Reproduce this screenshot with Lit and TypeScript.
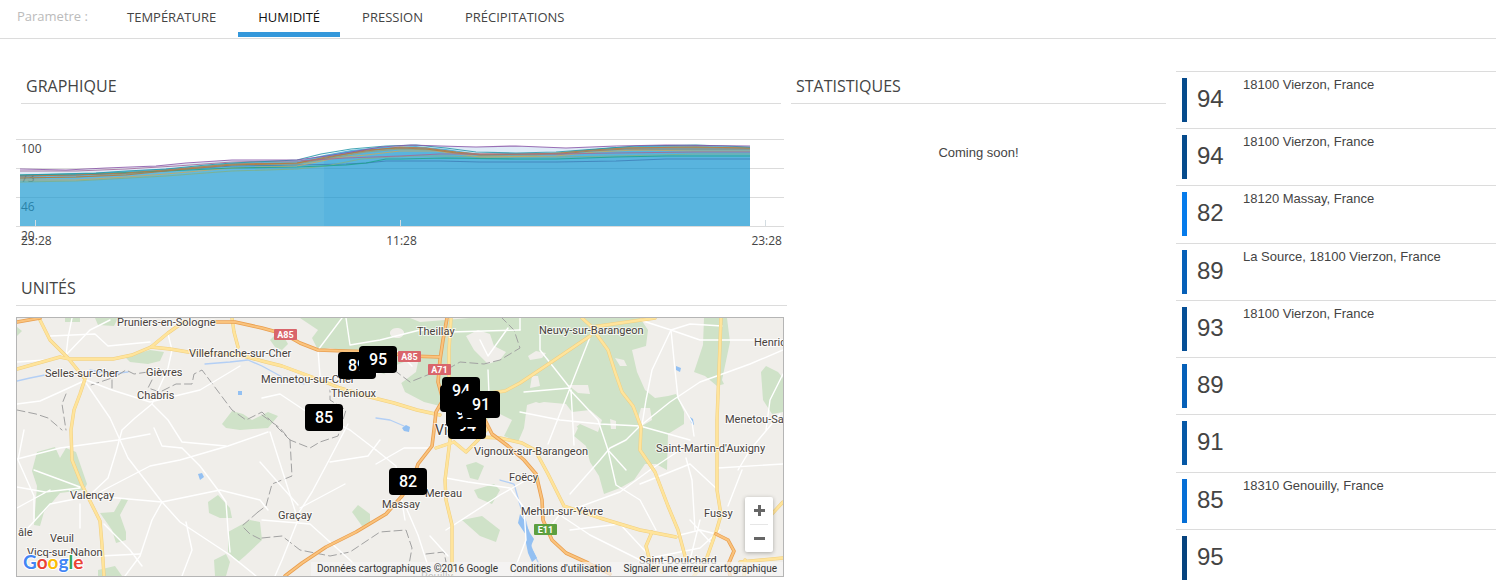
import { LitElement, html, svg, css } from "lit";
import { customElement, property, state } from "lit/decorators.js";
import { classMap } from "lit/directives/class-map.js";

interface Unit {
  value: number;
  color: string;
  address: string;
}

const UNITS: Unit[] = [
  { value: 94, color: "#064b8c", address: "18100 Vierzon, France" },
  { value: 94, color: "#064b8c", address: "18100 Vierzon, France" },
  { value: 82, color: "#067beb", address: "18120 Massay, France" },
  { value: 89, color: "#0660b8", address: "La Source, 18100 Vierzon, France" },
  { value: 93, color: "#064f96", address: "18100 Vierzon, France" },
  { value: 89, color: "#0660b8", address: "" },
  { value: 91, color: "#0658a6", address: "" },
  { value: 85, color: "#066fd6", address: "18310 Genouilly, France" },
  { value: 95, color: "#06437e", address: "" },
];

const PARAMETERS = ["Température", "Humidité", "Pression", "Précipitations"];

/* ---------- chart ---------- */

const SERIES: { color: string; points: string }[] = [
  { color: "#3f7fb8", points: "4,37 60,36 120,34 170,30 216,27 281,26 330,25 350,24 370,22 424,22 464,23 540,23 600,22 650,20 734,20" },
  { color: "#7fb08a", points: "4,43 60,42 150,37 216,32 281,30 310,27 345,20 375,18 400,17 430,17 464,18 540,18 600,17 680,15 734,15" },
  { color: "#c8a860", points: "4,41 60,41 110,38 150,35 216,29 281,27 320,19 350,16 384,12 420,12 464,18 540,17 580,13 620,11 680,12 734,12" },
  { color: "#9aa070", points: "4,39 60,38 110,35 160,31 216,26 281,25 310,20 350,13 384,10 420,11 464,16 520,16 560,12 600,9 660,8 734,9" },
  { color: "#1fa38c", points: "4,36 60,35 95,34 150,32 216,29 281,28 330,26 350,24 370,20 384,20 430,19 500,20 540,20 600,18 650,17 734,17" },
  { color: "#c07a3e", points: "4,37 60,36 110,34 160,30 216,25 281,24 310,18 350,12 384,8 410,9 440,13 464,15 510,15 545,14 575,11 610,9 680,8 734,9" },
  { color: "#b5793f", points: "4,39 60,38 110,36 160,31 216,26 281,24 310,19 350,11 384,9 410,10 440,14 464,16 510,15 545,15 575,12 610,10 680,10 734,10" },
  { color: "#a46a98", points: "4,32 60,32 110,30 160,27 216,23 281,22 330,19 384,17 424,15 540,15 600,14 680,13 734,13" },
  { color: "#2596a8", points: "4,36 40,35 80,34 110,32 150,30 190,26 216,24 281,21 305,15 335,10 370,7 400,6 430,9 460,13 500,14 540,13 580,10 620,7 680,6 734,8" },
  { color: "#8a56a8", points: "4,30 50,31 90,29 140,27 170,24 216,21 281,21 310,17 335,13 365,8 395,6 424,7 460,8 500,7 550,9 600,7 650,6 734,7" },
];

const TICKS = [19, 384, 749];

@customElement("humidity-chart")
class HumidityChart extends LitElement {
  static styles = css`
    :host {
      display: block;
      font: 12px/16px "Open Sans", sans-serif;
      color: #444;
    }
    .plot {
      position: relative;
    }
    .scale {
      position: absolute;
      top: 2px;
      left: 5px;
      display: grid;
      grid-auto-rows: 29px;
    }
    .area {
      position: relative;
      display: block;
      width: 100%;
      height: 88px;
    }
    .time {
      display: flex;
      justify-content: space-between;
      padding: 6px 2px 0 5px;
    }
  `;

  render() {
    return html`
      <div class="plot">
        <div class="scale">
          <span>100</span><span>73</span><span>46</span><span>20</span>
        </div>
        <svg class="area" viewBox="0 0 768 88" preserveAspectRatio="none" role="img" aria-label="Humidité">
          ${[0, 29, 58, 87].map(
            (y) => svg`<rect x="0" y=${y} width="768" height="1" fill="#000" fill-opacity=".14"></rect>`,
          )}
          <path
            d="M4 31 50 31 90 30 140 27 216 21 281 21 281 22 216 24 160 29 110 32 60 35 4 36Z M400 6 460 8 500 7 550 9 600 7 600 9 540 14 464 15 430 10Z"
            fill="#dfeaf6"
          ></path>
          <path d="M4 36 60 35 110 32 160 29 216 24 281 22 308 16 V87 H4Z" fill="#209bd1" fill-opacity=".7"></path>
          <path
            d="M308 16 335 11 365 8 400 7 430 10 464 15 540 14 600 8 650 6 734 8 V87 H308Z"
            fill="#1394d0" fill-opacity=".7"
          ></path>
          ${SERIES.map(
            (s) => svg`<polyline points=${s.points} fill="none" stroke=${s.color} stroke-width="1.2"
              stroke-opacity=".85" stroke-linejoin="round"></polyline>`,
          )}
          ${TICKS.map((x) => svg`<rect x=${x} y="81" width="1" height="6" fill="#d4dde2"></rect>`)}
        </svg>
      </div>
      <div class="time"><span>23:28</span><span>11:28</span><span>23:28</span></div>
    `;
  }
}

/* ---------- map ---------- */

const FORESTS = [
  "M300 318H410L420 322 470 318H640L648 330 646 346 632 350 637 372 645 390 655 398 668 396 676 394 684 412 684 424 668 434 667 470 656 464 645 464 634 480 620 488 604 494 599 476 590 462 586 446 574 436 578 428 560 410 536 402 527 405 524 428 518 442 504 436 512 420 500 414 486 420 470 410 440 406 424 402 405 392 400 380 384 374 360 366 352 352 330 348 318 350 312 338 318 330Z",
  "M270 340 280 330 288 344 282 350 275 347Z",
  "M37 452 55 447 60 458 66 448 76 452 87 484 84 490 60 493 44 512 40 526 34 525 37 486 32 471Z",
  "M100 513 114 512 122 498 128 500 120 515 126 532 126 540 116 543 112 530Z",
  "M125 357 150 350 164 352 160 361 148 364 130 362Z",
  "M17 327 22 331 17 336Z",
  "M95 318H118L114 326 98 325Z M65 318H80V322H65Z",
  "M222 424 232 411 243 414 252 420 268 412 278 416 268 428 240 430 226 428Z",
  "M208 502 218 495 230 508 232 518 220 518 209 513Z",
  "M228 532 250 520 260 522 262 540 245 556 238 562 228 552Z",
  "M214 560 226 554 230 562 226 576H215Z",
  "M98 570 115 566 122 576H98Z",
  "M352 512 358 505 370 514 370 524 362 526Z",
  "M704 318H727L730 342 722 380 724 384 717 386 705 376 694 372 703 345Z",
  "M761 372 766 366 778 372 783 378V412L772 414 763 400Z",
  "M466 465 476 462 484 466 478 480 470 478Z M474 490 494 484 500 490 492 504 478 498Z",
  "M462 520 482 516 500 530 496 542 480 536Z",
];

const CLEARINGS = [
  "M390 332a7 5 0 1 0 14 2a7 5 0 1 0-14-2Z",
  "M466 336 478 330 490 334 494 346 506 352 500 360 488 364 474 350Z",
  "M528 356 536 351 546 353 542 358 530 360Z M532 376 538 376 540 386 530 388Z",
  "M615 358 624 360 627 366 620 366Z M568 385 588 385 590 394 578 393Z",
  "M527 406 544 402 566 404 572 412 590 410 602 420 598 432 580 424 560 440 527 444Z",
  "M641 408 650 408 652 420 642 426 638 418Z M610 419l6 2 0 8 -5 0Z",
  "M384 374 394 366 404 362 418 362 416 372 400 384Z M338 352 350 350 366 362 350 366Z",
];

const WATER = [
  "M402 428l4-3 4 2-1 5-5-1Z",
  "M198 474l4-1 2 4-4 3Z",
  "M676 366l5 2-1 4-4-2Z M690 417l3 2 1 6-3-2Z M238 391l4 0 0 4-4 0Z",
  "M520 514l5 7 5 12 4 6-3 7 6 12-5 4-4-9-2-10 0-8-8-12Z",
];

const RIVERS = [
  "M17 381 30 378 45 375 M90 370 110 374 128 372 M205 364 230 362 248 360 262 366 284 378 304 384 M376 418 390 420 404 426",
  "M500 480 514 484 520 505 526 522 532 550 540 566",
];

const MINOR_ROADS = [
  "M17 362 45 360 66 355 90 330 110 320 M66 356 68 338 72 318",
  "M50 336 95 334 108 346 150 342 M168 334 172 350 168 368 152 404 168 420 182 442 226 446",
  "M17 404 40 401 60 392 86 380 112 390 150 402 200 390 240 366 M152 404 135 418 122 430 116 452 108 478 93 492",
  "M84 380 110 418 120 440 128 458 145 480 162 502 M162 502 152 520 140 556 125 576",
  "M17 459 60 448 118 440 150 434 M154 428 162 446 182 448 200 466 218 490 226 502 228 530 230 552",
  "M17 487 45 492 80 488 M17 508 50 490 M34 470 80 487 M24 430 18 460 34 496 34 520",
  "M28 528 50 504 80 498 M80 504 80 528 M100 492 150 466 180 460 228 446 268 432 M95 496 162 502 220 490 260 500 268 510",
  "M162 502 180 522 230 555 256 576 M104 524 130 550 142 566 M100 556 140 554 M186 522 192 550 182 576",
  "M262 520 310 524 350 560 365 576 M270 432 298 520 282 560 275 576 M298 514 312 492 328 462 348 424 M330 462 368 456 380 440",
  "M260 462 298 505 M262 398 280 394 304 410 330 420 350 430 376 450 M320 376 318 350 342 318",
  "M346 318 350 345 M350 345 380 340 420 330 450 332 520 330 M350 370 376 374 396 350 412 366",
  "M376 450 396 466 405 520 M376 464 404 448 430 448 M405 505 418 535 428 566 M300 508 345 484",
  "M446 530 500 495 530 478 M448 556 430 536 M446 478 468 482 510 488 524 508 526 540 512 576",
  "M488 370 489 395 M488 356 508 328 M488 356 480 340 M520 318 520 330",
  "M592 332 570 388 548 444 M570 390 598 420 608 450 626 470 M540 330 540 350 570 388 524 392",
  "M571 390 574 445 M520 412 560 420 600 424 640 426 M640 426 670 402 700 382 728 372 750 364 783 350",
  "M640 426 626 440 610 448 600 460 570 494 M640 426 690 440 M671 330 675 370 678 398 692 422 694 436",
  "M671 330 640 320 M671 330 652 370 646 400 642 425 M671 330 700 340 783 340 M671 330 690 324 722 326",
  "M680 450 650 470 620 492 560 514 548 530 M686 458 692 480 695 530 M608 450 616 485 640 500 656 530",
  "M738 470 750 450 780 414 M728 506 742 470 M718 468 783 464 M718 490 690 464 640 484 M783 374 770 400 766 430",
  "M560 515 590 535 640 560 M570 530 620 524 646 552 M640 560 700 548 720 530",
  "M676 536 700 530 716 534 M690 520 712 544 M670 560 680 576 M700 520 690 560",
];

const MAJOR_ROADS = [
  "M39 318 50 340 68 358 85 379 80 394 74 410 71 430 72 460 82 485 91 503 100 521 102 545 104 576",
  "M17 369 60 357 70 359 113 359 132 355 151 347 168 333 185 321",
  "M151 347 170 349 188 352 240 355 262 361 282 366 320 380 340 388 370 397 394 403 417 410 440 415",
  "M232 318 234 332 238 347",
  "M451 318 449 350 449 380 455 405 450 440 445 480 446 500 452 525 452 576",
  "M466 400 490 393 505 391 520 383 550 363 590 336 M592 327 620 323 655 318 M582 318 592 327",
  "M592 328 608 350 615 372 622 392 633 406 641 427 640 450 655 472 668 506 678 530 685 556",
  "M721 318 719 370 717 420 717 490 721 515 716 532 706 560 694 576",
  "M480 437 500 438 522 443 535 450 548 474 564 506 600 518 640 530 676 537",
  "M454 442 466 452 478 440 488 428 M436 448 454 442",
  "M652 532 646 546 650 562 662 572 M740 562 783 558 M745 560 744 576 M783 502 770 516",
];

const MOTORWAYS = [
  "M17 322 40 318",
  "M215 322 235 322 262 328 284 334 300 343 318 350 345 351 380 352 410 356 440 357",
  "M447 318 443 340 440 360 438 382 443 400 436 412 434 430 432 446 418 464 412 482 402 496 386 514 356 532 326 547 302 563 285 576",
  "M484 418 492 434 508 446 524 460 536 474 542 500 543 520 552 540 566 553 588 563 610 574",
  "M716 534 728 540 734 551 728 565 730 576",
];

const BOUNDARIES = [
  "M118 375 126 370 134 374 148 372 M152 380 148 388 160 392 176 384 192 384 194 374 202 370 214 386 232 410 246 420 262 412 290 440",
  "M112 388 112 378 88 386 M66 394 62 404 66 430 M17 410 36 414 48 418 62 430",
  "M262 415 280 428 290 440 310 448 320 442 338 436 346 410 330 400 330 390 M290 440 292 476 272 484 266 506 258 512",
  "M394 370 410 382 430 374 446 370 460 362 484 364 500 360 520 348 514 330 502 318",
  "M258 512 242 526 250 534 262 540 M262 538 282 536 300 550 330 556 350 552 380 532 406 530 412 548 408 570 M426 554 444 552 446 562",
];

const PLACES: [number, number, string][] = [
  [117, 326, "Pruniers-en-Sologne"],
  [189, 357, "Villefranche-sur-Cher"],
  [45, 377, "Selles-sur-Cher"],
  [146, 376, "Gièvres"],
  [137, 399, "Chabris"],
  [261, 383, "Mennetou-sur-Cher"],
  [331, 397, "Thénioux"],
  [417, 335, "Theillay"],
  [539, 334, "Neuvy-sur-Barangeon"],
  [754, 346, "Henrichemont"],
  [725, 423, "Menetou-Salon"],
  [656, 452, "Saint-Martin-d'Auxigny"],
  [474, 455, "Vignoux-sur-Barangeon"],
  [509, 481, "Foëcy"],
  [521, 515, "Mehun-sur-Yèvre"],
  [704, 517, "Fussy"],
  [639, 564, "Saint-Doulchard"],
  [425, 497, "Mereau"],
  [382, 508, "Massay"],
  [278, 519, "Graçay"],
  [70, 499, "Valençay"],
  [50, 542, "Veuil"],
  [27, 556, "Vicq-sur-Nahon"],
  [18, 536, "âle"],
  [421, 580, "Reuilly"],
];

const SHIELDS: [number, number, string, string][] = [
  [274, 329, "A85", "#d9656b"],
  [398, 351, "A85", "#d9656b"],
  [428, 364, "A71", "#d9656b"],
  [534, 524, "E11", "#5d9f3f"],
];

const MARKERS: [number, number, number][] = [
  [338, 352, 89],
  [359, 346, 95],
  [305, 404, 85],
  [448, 412, 94],
  [446, 400, 93],
  [440, 385, 89],
  [442, 377, 94],
  [462, 391, 91],
  [389, 468, 82],
];

@customElement("units-map")
class UnitsMap extends LitElement {
  static styles = css`
    :host {
      display: block;
      position: relative;
      border: 1px solid #b5b5b5;
      overflow: hidden;
      font-family: Roboto, sans-serif;
    }
    .canvas {
      display: block;
      width: 100%;
      height: 258px;
      background: #f0eeea;
    }
    .line {
      fill: none;
      stroke-linejoin: round;
      stroke-linecap: round;
    }
    .place {
      font-size: 11px;
      fill: #48423c;
      stroke: #fff;
      stroke-opacity: 0.7;
      stroke-width: 2px;
      paint-order: stroke;
    }
    .city {
      font-size: 14px;
    }
    .shield {
      font-size: 9px;
      font-weight: 700;
      fill: #fff;
      text-anchor: middle;
    }
    .marker {
      font-size: 16px;
      font-weight: 500;
      fill: #fff;
      text-anchor: middle;
    }
    .logo {
      font: 700 19px Lato, sans-serif;
      stroke: #fff;
      stroke-width: 2px;
      paint-order: stroke;
    }
    .zoom {
      position: absolute;
      right: 10px;
      bottom: 24px;
      width: 28px;
      border-radius: 2px;
      background: #fff;
      box-shadow: 0 1px 4px rgba(0, 0, 0, 0.3);
    }
    .zoom button {
      display: grid;
      place-items: center;
      width: 28px;
      height: 27px;
      padding: 0;
      border: 0;
      background: none;
    }
    .zoom hr {
      height: 1px;
      margin: 0 5px;
      border: 0;
      background: #e6e6e6;
    }
    .legal {
      position: absolute;
      right: 0;
      bottom: 0;
      display: flex;
      gap: 12px;
      padding: 0 6px;
      background: rgba(245, 245, 245, 0.7);
      color: #333;
      font-size: 10px;
      line-height: 14px;
    }
    .legal a {
      color: inherit;
      text-decoration: none;
    }
  `;

  render() {
    const lines = (paths: string[], color: string, width: number, dash = "none") =>
      paths.map(
        (d) => svg`<path class="line" d=${d} stroke=${color} stroke-width=${width}
          stroke-dasharray=${dash}></path>`,
      );
    return html`
      <svg class="canvas" viewBox="17 318 766 258" preserveAspectRatio="xMidYMid slice" role="img" aria-label="Carte des unités">
        ${FORESTS.map((d) => svg`<path d=${d} fill="#cfe2c8"></path>`)}
        ${CLEARINGS.map((d) => svg`<path d=${d} fill="#f0eeea"></path>`)}
        ${lines(RIVERS, "#b3cff5", 1.3)}
        ${WATER.map((d) => svg`<path d=${d} fill="#93c0f2"></path>`)}
        ${lines(BOUNDARIES, "#a2a2a2", 1, "8 4")}
        ${lines(MINOR_ROADS, "#ffffff", 1.4)}
        ${lines(MAJOR_ROADS, "#f0cf80", 3.4)}
        ${lines(MAJOR_ROADS, "#ffe49b", 2.4)}
        ${lines(MOTORWAYS, "#e99f50", 3.6)}
        ${lines(MOTORWAYS, "#fac37d", 2)}
        ${PLACES.map(([x, y, name]) => svg`<text class="place" x=${x} y=${y}>${name}</text>`)}
        <text class="place city" x="435" y="435">Vierzon</text>
        ${SHIELDS.map(
          ([x, y, name, color]) => svg`
            <rect x=${x} y=${y} width="23" height="11" rx="1" fill=${color}></rect>
            <text class="shield" x=${x + 11.5} y=${y + 9}>${name}</text>`,
        )}
        ${MARKERS.map(
          ([x, y, value]) => svg`
            <rect x=${x} y=${y} width="38" height="27" rx="4" fill="#000"></rect>
            <text class="marker" x=${x + 19} y=${y + 19}>${value}</text>`,
        )}
        <text class="logo" x="23" y="569"><tspan fill="#4285f4">G</tspan><tspan fill="#ea4335">o</tspan><tspan fill="#fbbc05">o</tspan><tspan fill="#4285f4">g</tspan><tspan fill="#34a853">l</tspan><tspan fill="#ea4335">e</tspan></text>
      </svg>
      <div class="zoom">
        <button type="button" aria-label="Zoom avant">
          <svg width="11" height="11" viewBox="0 0 11 11"><path d="M4 0h3v4h4v3H7v4H4V7H0V4h4Z" fill="#666"></path></svg>
        </button>
        <hr />
        <button type="button" aria-label="Zoom arrière">
          <svg width="11" height="3" viewBox="0 0 11 3"><path d="M0 0h11v3H0Z" fill="#666"></path></svg>
        </button>
      </div>
      <div class="legal">
        <span>Données cartographiques ©2016 Google</span>
        <a href="#conditions">Conditions d'utilisation</a>
        <a href="#signaler">Signaler une erreur cartographique</a>
      </div>
    `;
  }
}

/* ---------- list of units ---------- */

@customElement("unit-list")
class UnitList extends LitElement {
  @property({ attribute: false }) units: Unit[] = [];

  static styles = css`
    :host {
      display: grid;
      font-family: "Liberation Sans", Arial, sans-serif;
      color: #444;
    }
    ul {
      display: grid;
      grid-auto-rows: 1fr;
      margin: 0;
      padding: 0;
      list-style: none;
    }
    li {
      display: grid;
      grid-template-columns: 5px 36px 1fr;
      column-gap: 10px;
      align-items: start;
      padding: 6px;
      border-top: 1px solid #dcdcdc;
    }
    .level {
      height: 44px;
    }
    .value {
      font-size: 24px;
      line-height: 42px;
    }
    .address {
      font-size: 13px;
      line-height: 14px;
    }
  `;

  render() {
    return html`<ul>
      ${this.units.map(
        (u) => html`<li>
          <span class="level" style="background:${u.color}"></span>
          <span class="value">${u.value}</span>
          <span class="address">${u.address}</span>
        </li>`,
      )}
    </ul>`;
  }
}

/* ---------- page ---------- */

@customElement("app-root")
class AppRoot extends LitElement {
  @state() private active = "Humidité";

  static styles = css`
    :host {
      display: block;
      height: 100vh;
      overflow-y: auto;
      scrollbar-width: none;
      background: #fff;
      color: #444;
      font-family: "Open Sans", sans-serif;
    }
    nav {
      display: flex;
      gap: 2px;
      padding-left: 17px;
      border-bottom: 1px solid #dcdcdc;
      font-size: 13px;
      line-height: 33px;
    }
    .caption {
      width: 88px;
      color: #bbb;
    }
    .tab {
      box-sizing: border-box;
      height: 37px;
      margin-bottom: 1px;
      padding: 1px 20px 0;
      border: 0;
      border-bottom: 5px solid transparent;
      background: none;
      color: #444;
      font: inherit;
      text-transform: uppercase;
    }
    .tab.active {
      border-bottom-color: #3498db;
      color: #111;
    }
    main {
      display: grid;
      grid-template-columns: minmax(0, 771fr) minmax(0, 389fr) 320px;
      padding: 32px 0 0 16px;
    }
    .left {
      padding-bottom: 9px;
    }
    h2 {
      margin: 0;
      padding: 4px 5px 5px;
      border-bottom: 1px solid #dcdcdc;
      font-size: 16px;
      line-height: 23px;
      font-weight: 400;
      text-transform: uppercase;
    }
    .inset {
      margin: 0 6px 0 5px;
    }
    .chart {
      margin: 35px 3px 24px 0;
    }
    .map {
      margin: 11px 3px 0 0;
    }
    .stats {
      padding: 0 10px 0 4px;
    }
    .soon {
      margin: 41px 0 0;
      text-align: center;
      font: 13px/16px "Liberation Sans", Arial, sans-serif;
    }
  `;

  render() {
    return html`
      <nav>
        <span class="caption">Parametre :</span>
        ${PARAMETERS.map(
          (p) => html`<button
            type="button"
            class=${classMap({ tab: true, active: p === this.active })}
            @click=${() => (this.active = p)}
          >${p}</button>`,
        )}
      </nav>
      <main>
        <section class="left">
          <h2 class="inset">Graphique</h2>
          <humidity-chart class="chart"></humidity-chart>
          <h2>Unités</h2>
          <units-map class="map"></units-map>
        </section>
        <section class="stats">
          <h2>Statistiques</h2>
          <p class="soon">Coming soon!</p>
        </section>
        <unit-list .units=${UNITS}></unit-list>
      </main>
    `;
  }
}
